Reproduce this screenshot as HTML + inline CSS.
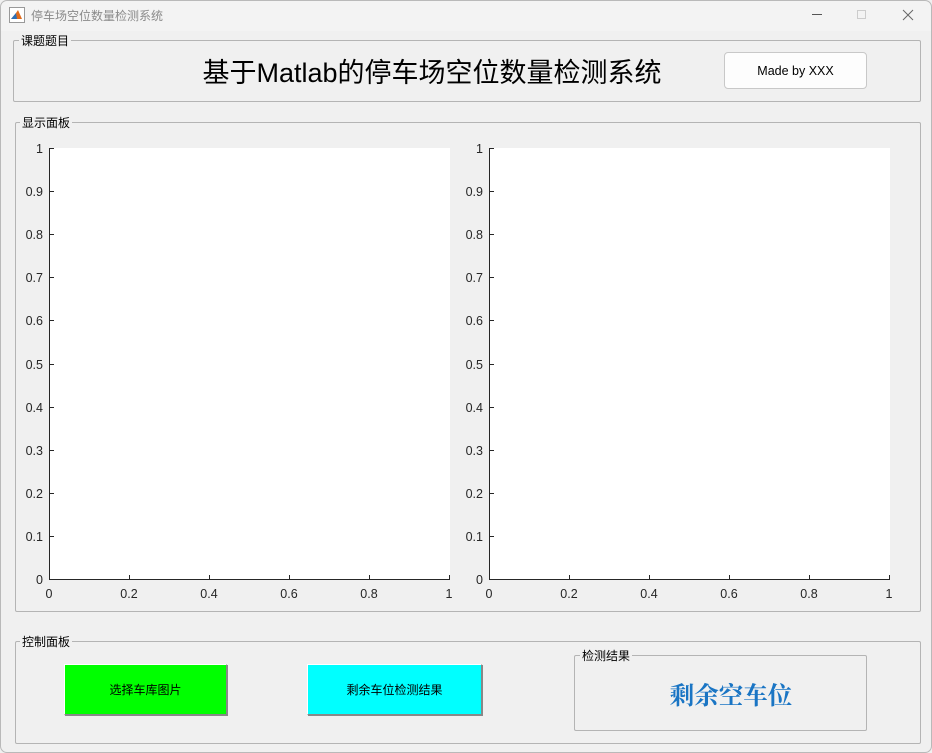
<!DOCTYPE html>
<html><head><meta charset="utf-8"><style>
*{margin:0;padding:0;box-sizing:border-box}
body{width:932px;height:753px;background:#f0f0f0;position:relative;overflow:hidden;font-family:"Liberation Sans","Noto Sans CJK SC",sans-serif;}
.win{position:absolute;left:0;top:0;width:932px;height:753px;border-radius:7px;background:#f0f0f0;overflow:hidden}
.frame{position:absolute;left:0;top:0;width:932px;height:753px;border:1px solid #b9b9b9;border-radius:7px;pointer-events:none}
.tb{position:absolute;left:0;top:0;width:932px;height:31px;background:#f3f3f3}
.tt{position:absolute;left:31px;top:7px;font-size:12px;color:#8a8a8a}
.p{position:absolute;border:1px solid #b4b4b4;border-radius:2px}
.lb{position:absolute;background:#f0f0f0;font-size:12px;padding:0 2px;color:#000;line-height:14px}
.ax{position:absolute;background:#fff;border-left:1px solid #262626;border-bottom:1px solid #262626}
.t{position:absolute;font-size:12.5px;color:#262626;line-height:14px}
.tk{position:absolute;background:#262626}
.btn{position:absolute;font-size:12px;display:flex;align-items:center;justify-content:center;border:1px solid #fff;border-right-color:#888;border-bottom-color:#888;box-shadow:1px 1px 0 #888}
</style></head><body><div class="win">
<div class="tb"></div>
<svg style="position:absolute;left:9px;top:7px" width="16" height="16"><rect x="0.5" y="0.5" width="15" height="15" fill="#fff" stroke="#999"/><path d="M2 12 L7 6 L9 3 L13 12 Z" fill="#e06b1c"/><path d="M2 12 L7 6 L8 12Z" fill="#2a6fb8"/></svg>
<div class="tt">停车场空位数量检测系统</div>
<div style="position:absolute;left:812px;top:14px;width:10px;height:1px;background:#555"></div>
<div style="position:absolute;left:857px;top:10px;width:9px;height:9px;border:1px solid #ccc"></div>
<svg style="position:absolute;left:902px;top:9px" width="12" height="12"><path d="M1 1L11 11M11 1L1 11" stroke="#666" stroke-width="1"/></svg>

<div class="p" style="left:13px;top:40px;width:908px;height:62px"></div>
<div class="lb" style="left:19px;top:34px">课题题目</div>
<div style="position:absolute;left:0;width:864px;top:51px;text-align:center;font-size:27px;color:#000">基于Matlab的停车场空位数量检测系统</div>
<div style="position:absolute;left:724px;top:52px;width:143px;height:37px;background:#fdfdfd;border:1px solid #c8c8c8;border-radius:4px;font-size:12.5px;display:flex;align-items:center;justify-content:center">Made by XXX</div>

<div class="p" style="left:15px;top:122px;width:906px;height:490px"></div>
<div class="lb" style="left:20px;top:116px">显示面板</div>
<div id="axes"></div>

<div class="p" style="left:15px;top:641px;width:906px;height:103px"></div>
<div class="lb" style="left:20px;top:635px">控制面板</div>
<div class="btn" style="left:64px;top:664px;width:163px;height:51px;background:#00ff00">选择车库图片</div>
<div class="btn" style="left:307px;top:664px;width:175px;height:51px;background:#00ffff">剩余车位检测结果</div>
<div class="p" style="left:574px;top:655px;width:293px;height:76px"></div>
<div class="lb" style="left:580px;top:649px">检测结果</div>
<div style="position:absolute;left:574px;width:314px;top:677px;text-align:center;font-size:24.5px;font-weight:bold;color:#1a75c4;font-family:'Liberation Serif','Noto Serif CJK SC',serif">剩余空车位</div>
</div>
<div class="frame"></div>
<script>
var h='';
[49,489].forEach(function(x0){
 h+='<div class="ax" style="left:'+x0+'px;top:148px;width:401px;height:432px"></div>';
 for(var i=0;i<=10;i++){var y=579-i*43.1;var l=i==10?'1':i==0?'0':'0.'+i;
  h+='<div class="t" style="left:'+(x0-41)+'px;width:35px;text-align:right;top:'+(y-6)+'px">'+l+'</div>';
  h+='<div class="tk" style="left:'+(x0+1)+'px;top:'+Math.round(y)+'px;width:4px;height:1px"></div>';}
 for(var j=0;j<=5;j++){var x=x0+j*80;var l=j==5?'1':j==0?'0':'0.'+(j*2);
  h+='<div class="t" style="left:'+(x-20)+'px;width:40px;text-align:center;top:587px">'+l+'</div>';
  h+='<div class="tk" style="left:'+x+'px;top:575px;width:1px;height:4px"></div>';}
});
document.getElementById('axes').innerHTML=h;
</script>
</body></html>
